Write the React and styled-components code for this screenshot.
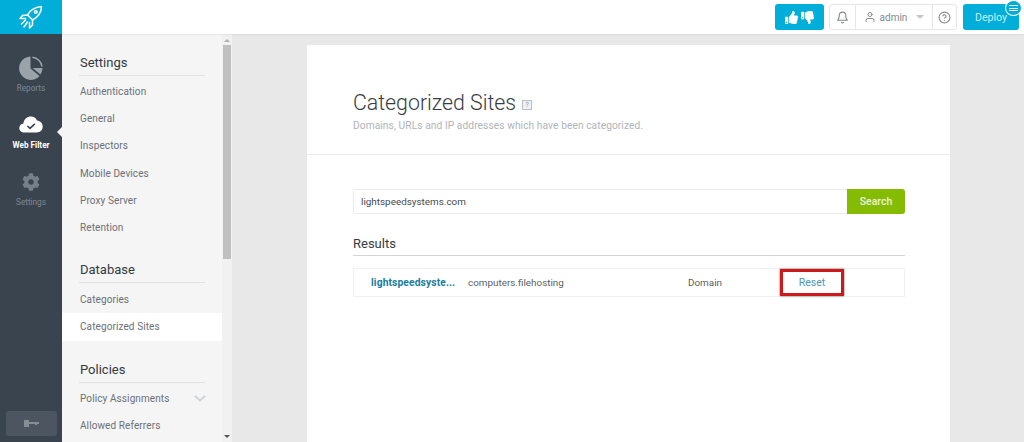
import React from 'react';
import styled, { createGlobalStyle } from 'styled-components';
import { FaThumbsUp, FaThumbsDown, FaCog } from 'react-icons/fa';
import { FiBell, FiUser, FiHelpCircle } from 'react-icons/fi';

const GlobalStyle = createGlobalStyle`
  html, body { margin: 0; height: 100%; overflow: hidden; }
  body { font-family: Roboto, "Liberation Sans", sans-serif; background: #e8e8e8; }
  #root { height: 100%; }
  * { box-sizing: border-box; }
`;

const Page = styled.div`
  display: grid;
  grid-template-columns: 62px 160px 10px 1fr;
  grid-template-rows: 34px 1fr;
  width: 1024px;
  height: 442px;
  overflow: hidden;
`;

const Logo = styled.div`
  background: #00aed9;
  display: flex;
  align-items: center;
  justify-content: center;
`;

const TopBar = styled.header`
  grid-column: 2 / 5;
  background: #fff;
  display: flex;
  align-items: center;
  justify-content: flex-end;
  padding: 0 5px 0 0;
  box-shadow: 0 1px 2px rgba(0, 0, 0, 0.06);
  position: relative;
  z-index: 2;
`;

const VoteButton = styled.div`
  width: 49px;
  height: 26px;
  border-radius: 3px;
  background: #00aed9;
  color: #fff;
  display: flex;
  align-items: center;
  justify-content: center;
  gap: 3px;
  margin-right: 5px;
`;

const UserGroup = styled.div`
  display: flex;
  height: 26px;
  border: 1px solid #e6e6e6;
  border-radius: 3px;
  margin-right: 6px;
  color: #85888c;
`;

const GroupCell = styled.div`
  width: ${(p) => p.$w}px;
  display: flex;
  align-items: center;
  justify-content: center;
  gap: 4px;
  font-size: 10px;
  & + & { border-left: 1px solid #e6e6e6; }
`;

const Caret = styled.span`
  width: 0;
  height: 0;
  margin-left: 5px;
  border-left: 4px solid transparent;
  border-right: 4px solid transparent;
  border-top: 4px solid #c4c6c8;
`;

const DeployButton = styled.div`
  position: relative;
  width: 56px;
  height: 26px;
  border-radius: 3px;
  background: #00aed9;
  color: #c9eef7;
  font-size: 10.5px;
  display: flex;
  align-items: center;
  justify-content: center;
`;

const DeployBadge = styled.span`
  position: absolute;
  top: -4px;
  right: -3px;
  width: 17px;
  height: 16px;
  border-radius: 50%;
  background: #00aed9;
  border: 1px solid #fff;
  display: flex;
  flex-direction: column;
  align-items: center;
  justify-content: center;
  gap: 1.5px;
  & i {
    display: block;
    width: 9px;
    height: 1px;
    background: #fff;
  }
`;

const Rail = styled.nav`
  background: #3a444f;
  display: flex;
  flex-direction: column;
  align-items: center;
  padding-top: 20px;
  position: relative;
`;

const RailItem = styled.div`
  position: relative;
  width: 100%;
  height: 57px;
  display: flex;
  flex-direction: column;
  align-items: center;
  color: ${(p) => (p.$active ? '#fff' : '#7d8791')};
  font-size: 8.2px;
  line-height: 10px;
  font-weight: ${(p) => (p.$active ? 700 : 400)};
`;

const RailIcon = styled.div`
  height: 27px;
  display: flex;
  align-items: center;
  justify-content: center;
  margin-bottom: 2px;
`;

const ActiveNotch = styled.span`
  position: absolute;
  right: 0;
  top: 16px;
  width: 0;
  height: 0;
  border-top: 5px solid transparent;
  border-bottom: 5px solid transparent;
  border-right: 5px solid #f5f5f5;
`;

const KeyButton = styled.div`
  position: absolute;
  left: 6px;
  bottom: 6px;
  width: 51px;
  height: 25px;
  border-radius: 3px;
  background: #4c5560;
  display: flex;
  align-items: center;
  justify-content: center;
`;

const SubNav = styled.aside`
  background: #f5f5f5;
  overflow: hidden;
  padding-top: 20px;
`;

const NavHeading = styled.h3`
  margin: ${(p) => p.$top || 0}px 17px 0;
  height: 16px;
  padding: 0 1px 5px;
  font-size: 13px;
  line-height: 18px;
  font-weight: 400;
  color: #333a40;
  box-sizing: content-box;
  border-bottom: 1px solid #e2e2e2;
`;

const NavList = styled.div`
  margin-top: ${(p) => p.$top || 2}px;
`;

const NavItem = styled.div`
  position: relative;
  height: 27.2px;
  padding-left: 18px;
  display: flex;
  align-items: center;
  font-size: 10px;
  letter-spacing: 0.1px;
  color: #6b7075;
  background: ${(p) => (p.$selected ? '#fff' : 'transparent')};
`;

const Chevron = styled.svg`
  position: absolute;
  right: 16px;
  top: 10px;
`;

const ScrollTrack = styled.div`
  background: #f1f1f1;
  position: relative;
  display: flex;
  flex-direction: column;
  align-items: center;
`;

const ScrollArrow = styled.span`
  position: absolute;
  left: 2px;
  ${(p) => (p.$down ? 'bottom: 4px;' : 'top: 5px;')}
  width: 0;
  height: 0;
  border-left: 3px solid transparent;
  border-right: 3px solid transparent;
  ${(p) => (p.$down ? 'border-top: 3px solid #555;' : 'border-bottom: 3px solid #b0b0b0;')}
`;

const ScrollThumb = styled.div`
  width: 8px;
  height: 214px;
  margin-top: 11px;
  background: #c0c0c0;
`;

const Main = styled.main`
  background: #e8e8e8;
  padding: 11px 74px 0 75px;
  overflow: hidden;
`;

const Card = styled.section`
  background: #fff;
  height: 420px;
`;

const CardHead = styled.div`
  height: 110px;
  padding: 45px 46px 0;
  border-bottom: 1px solid #ececec;
`;

const Title = styled.h1`
  margin: 0;
  font-size: 21.3px;
  line-height: 26px;
  font-weight: 300;
  color: #363c42;
  display: flex;
  align-items: center;
  gap: 6px;
`;

const HelpBox = styled.span`
  width: 10px;
  height: 10px;
  margin-top: 4px;
  border: 1px solid #b8c0c6;
  background: #eef1f3;
  color: #8f999f;
  font-size: 7px;
  line-height: 8px;
  text-align: center;
  font-weight: 400;
`;

const Subtitle = styled.p`
  margin: 3px 0 0;
  font-size: 10.2px;
  line-height: 13px;
  letter-spacing: 0.08px;
  color: #aeb4b9;
`;

const CardBody = styled.div`
  padding: 34px 45px 0 46px;
`;

const SearchRow = styled.div`
  display: flex;
  height: 25px;
`;

const SearchInput = styled.div`
  flex: 1;
  border: 1px solid #ececec;
  border-right: none;
  border-radius: 2px 0 0 2px;
  padding-left: 7px;
  display: flex;
  align-items: center;
  font-size: 9.9px;
  color: #454b50;
`;

const SearchButton = styled.div`
  width: 58px;
  background: #85bb00;
  border-radius: 0 3px 3px 0;
  color: #eef6d8;
  font-size: 10.5px;
  font-weight: 500;
  display: flex;
  align-items: center;
  justify-content: center;
`;

const SectionTitle = styled.h2`
  margin: 22px 0 0;
  height: 19px;
  font-size: 13px;
  line-height: 16px;
  font-weight: 400;
  color: #363c42;
  border-bottom: 1px solid #d4d4d4;
  box-sizing: content-box;
`;

const ResultRow = styled.div`
  margin-top: 12px;
  height: 29px;
  border: 1px solid #f0f0f0;
  display: grid;
  grid-template-columns: 114px 220px 92px 1fr;
  align-items: center;
  font-size: 9.9px;
  color: #5a5f64;
`;

const SiteLink = styled.span`
  padding-left: 17px;
  font-size: 10.3px;
  color: #1b7ca0;
  font-weight: 700;
  letter-spacing: 0.1px;
  white-space: nowrap;
`;

const ResetCell = styled.div`
  width: 64px;
  height: 27px;
  border: 3px solid #d0181c;
  box-shadow: 0 0 2px #3a6d68;
  color: #4d96b8;
  font-size: 10.5px;
  display: flex;
  align-items: center;
  justify-content: center;
`;

const App = () => (
  <>
    <GlobalStyle />
    <Page>
      <Logo>
        <svg width="24" height="24" viewBox="0 0 24 24" fill="none" stroke="#fff" strokeWidth="1.5" strokeLinejoin="round" strokeLinecap="round">
          <path d="M22.5 1.5 C16.5 2 11.5 4.5 8.5 10 L13.5 15 C19 12 22.5 8 22.5 1.5 Z" />
          <circle cx="16.8" cy="7" r="1.3" />
          <path d="M8.5 10 L3.5 10.5 L1 13.5 L6.5 13.5 M13.5 15 L13.5 20 L10.5 23 L10.5 17.5" />
          <path d="M6.5 15 L2.5 19 M8.5 17 L5 22" />
        </svg>
      </Logo>
      <TopBar>
        <VoteButton>
          <FaThumbsUp size={13} />
          <FaThumbsDown size={13} />
        </VoteButton>
        <UserGroup>
          <GroupCell $w={25}><FiBell size={13} /></GroupCell>
          <GroupCell $w={77}>
            <FiUser size={12} />
            admin
            <Caret />
          </GroupCell>
          <GroupCell $w={24}><FiHelpCircle size={13} /></GroupCell>
        </UserGroup>
        <DeployButton>
          Deploy
          <DeployBadge><i /><i /><i /></DeployBadge>
        </DeployButton>
      </TopBar>

      <Rail>
        <RailItem>
          <RailIcon>
            <svg width="24" height="24" viewBox="0 0 24 24">
              <path d="M11.5 0.5 V12.5 L20.5 20 A11.7 11.7 0 1 1 11.5 0.5 Z" fill="#9aa2aa" />
              <path d="M13.5 1.2 A11 11 0 0 1 23 10.5" fill="none" stroke="#9aa2aa" strokeWidth="1.5" />
              <path d="M13.5 12 H23.5 A11.7 11.7 0 0 1 21.5 18.5 Z" fill="#9aa2aa" />
            </svg>
          </RailIcon>
          Reports
        </RailItem>
        <RailItem $active>
          <RailIcon>
            <svg width="24" height="17" viewBox="0 0 24 17">
              <path d="M5.5 16.5 C2.3 16.5 0.3 14.4 0.3 11.9 C0.3 9.6 2 7.8 4.4 7.4 C5 3 8.2 0.5 11.8 0.5 C14.8 0.5 17 2 18 4.6 C21.4 5 23.7 7.3 23.7 10.6 C23.7 14.2 21.2 16.5 17.8 16.5 Z" fill="#fff" />
              <path d="M8.5 10 L11 12.4 L15.8 7.8" fill="none" stroke="#3a444f" strokeWidth="1.6" />
            </svg>
          </RailIcon>
          Web Filter
          <ActiveNotch />
        </RailItem>
        <RailItem>
          <RailIcon><FaCog size={18} color="#76808a" /></RailIcon>
          Settings
        </RailItem>
        <KeyButton>
          <svg width="15" height="7" viewBox="0 0 15 7" fill="#858d95">
            <path d="M0 0 H5 V2 H15 V4 H13 V5 H11 V4 H5 V7 H0 Z" />
          </svg>
        </KeyButton>
      </Rail>

      <SubNav>
        <NavHeading>Settings</NavHeading>
        <NavList>
          <NavItem>Authentication</NavItem>
          <NavItem>General</NavItem>
          <NavItem>Inspectors</NavItem>
          <NavItem>Mobile Devices</NavItem>
          <NavItem>Proxy Server</NavItem>
          <NavItem>Retention</NavItem>
        </NavList>
        <NavHeading $top={20}>Database</NavHeading>
        <NavList $top={3}>
          <NavItem>Categories</NavItem>
          <NavItem $selected>Categorized Sites</NavItem>
        </NavList>
        <NavHeading $top={20}>Policies</NavHeading>
        <NavList>
          <NavItem>
            Policy Assignments
            <Chevron width="12" height="7" viewBox="0 0 12 7" fill="none" stroke="#cfd3d6" strokeWidth="2">
              <path d="M1 1 L6 5.5 L11 1" />
            </Chevron>
          </NavItem>
          <NavItem>Allowed Referrers</NavItem>
        </NavList>
      </SubNav>
      <ScrollTrack>
        <ScrollArrow />
        <ScrollThumb />
        <ScrollArrow $down />
      </ScrollTrack>

      <Main>
        <Card>
          <CardHead>
            <Title>
              Categorized Sites
              <HelpBox>?</HelpBox>
            </Title>
            <Subtitle>Domains, URLs and IP addresses which have been categorized.</Subtitle>
          </CardHead>
          <CardBody>
            <SearchRow>
              <SearchInput>lightspeedsystems.com</SearchInput>
              <SearchButton>Search</SearchButton>
            </SearchRow>
            <SectionTitle>Results</SectionTitle>
            <ResultRow>
              <SiteLink>lightspeedsyste...</SiteLink>
              <span>computers.filehosting</span>
              <span>Domain</span>
              <ResetCell>Reset</ResetCell>
            </ResultRow>
          </CardBody>
        </Card>
      </Main>
    </Page>
  </>
);

export default App;
